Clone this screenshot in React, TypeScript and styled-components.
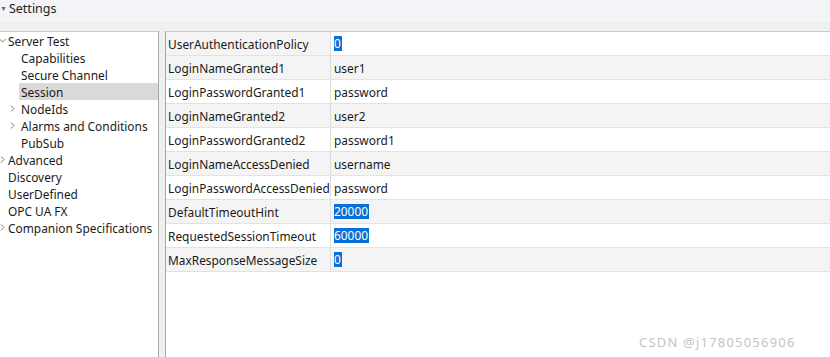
import styled, { createGlobalStyle } from "styled-components"

const GlobalStyle = createGlobalStyle`
    html, body {
        margin: 0;
        padding: 0;
        background: #f0f0f0;
    }
    body {
        font-family: "Noto Sans", "Open Sans", sans-serif;
        font-size: 11.9px;
        color: #1a1a1a;
    }
`

const Window = styled.div`
    display: flex;
    flex-direction: column;
    width: 830px;
    height: 357px;
    overflow: hidden;
`

const TitleBar = styled.div`
    display: flex;
    align-items: flex-start;
    height: 22px;
    gap: 2px;
    background: #f2f4f8;
    border-bottom: 1px solid #e8eaee;
    color: #222;
    font-size: 12.5px;
    line-height: 17px;
`

const TitleArrow = styled.span`
    font-size: 7px;
    color: #666;
`

const Body = styled.div`
    flex: 1;
    display: flex;
    padding-top: 8px;
    min-height: 0;
`

const TreePanel = styled.div`
    width: 158px;
    background: #fff;
    border-top: 1px solid #c8c8c8;
    border-right: 1px solid #a8a8a8;
`

const Splitter = styled.div`
    width: 6px;
    background: #efefef;
`

const TablePanel = styled.div`
    flex: 1;
    background: #fff;
    border-top: 1px solid #c8c8c8;
    border-left: 1px solid #a8a8a8;
`

const TreeRow = styled.div<{ $level: number; $selected?: boolean }>`
    display: flex;
    align-items: center;
    height: 17px;
    margin-left: ${p => (p.$level === 0 ? 0 : 19)}px;
    padding-left: ${p => (p.$level === 0 ? 8 : 2)}px;
    position: relative;
    background: ${p => (p.$selected ? "#d9d9d9" : "transparent")};
    white-space: nowrap;
`

const Twisty = styled.span<{ $level: number }>`
    position: absolute;
    left: ${p => (p.$level === 0 ? -2 : -11)}px;
    top: 0;
    width: 8px;
    height: 17px;
    display: flex;
    align-items: center;
    justify-content: center;
`

const Table = styled.div`
    display: grid;
    grid-template-columns: 164px 1fr;
`

const Cell = styled.div<{ $shade: boolean; $value?: boolean }>`
    height: 23px;
    display: flex;
    align-items: center;
    padding-left: ${p => (p.$value ? 3 : 2)}px;
    background: ${p => (p.$shade ? "#f4f4f4" : "#fff")};
    border-bottom: 1px solid #e2e2e2;
    border-left: ${p => (p.$value ? "1px solid #dcdcdc" : "none")};
    white-space: nowrap;
    overflow: hidden;
`

const Selected = styled.span`
    background: #0a6fd6;
    color: #fff;
    padding: 0 1px 0 0;
    line-height: 15px;
`

const Watermark = styled.div`
    position: absolute;
    left: 639px;
    top: 333px;
    color: #c4c4c4;
    font-size: 13px;
    letter-spacing: 1.2px;
`

type Node = { label: string; level: number; twisty?: "open" | "closed"; selected?: boolean }

const tree: Node[] = [
    { label: "Server Test", level: 0, twisty: "open" },
    { label: "Capabilities", level: 1 },
    { label: "Secure Channel", level: 1 },
    { label: "Session", level: 1, selected: true },
    { label: "NodeIds", level: 1, twisty: "closed" },
    { label: "Alarms and Conditions", level: 1, twisty: "closed" },
    { label: "PubSub", level: 1 },
    { label: "Advanced", level: 0, twisty: "closed" },
    { label: "Discovery", level: 0 },
    { label: "UserDefined", level: 0 },
    { label: "OPC UA FX", level: 0 },
    { label: "Companion Specifications", level: 0, twisty: "closed" },
]

const rows: { name: string; value: string; selected?: boolean }[] = [
    { name: "UserAuthenticationPolicy", value: "0", selected: true },
    { name: "LoginNameGranted1", value: "user1" },
    { name: "LoginPasswordGranted1", value: "password" },
    { name: "LoginNameGranted2", value: "user2" },
    { name: "LoginPasswordGranted2", value: "password1" },
    { name: "LoginNameAccessDenied", value: "username" },
    { name: "LoginPasswordAccessDenied", value: "password" },
    { name: "DefaultTimeoutHint", value: "20000", selected: true },
    { name: "RequestedSessionTimeout", value: "60000", selected: true },
    { name: "MaxResponseMessageSize", value: "0", selected: true },
]

const Chevron = ({ open }: { open: boolean }) => (
    <svg width="7" height="7" viewBox="0 0 7 7">
        <path d={open ? "M0.5 2 L3.5 5 L6.5 2" : "M2 0.5 L5 3.5 L2 6.5"} fill="none" stroke="#7a7a7a" strokeWidth="1" />
    </svg>
)

export default function App() {
    return (
        <Window>
            <GlobalStyle />
            <TitleBar>
                <TitleArrow>▼</TitleArrow>
                <span>Settings</span>
            </TitleBar>
            <Body>
                <TreePanel>
                    {tree.map(n => (
                        <TreeRow key={n.label} $level={n.level} $selected={n.selected}>
                            {n.twisty && (
                                <Twisty $level={n.level}>
                                    <Chevron open={n.twisty === "open"} />
                                </Twisty>
                            )}
                            {n.label}
                        </TreeRow>
                    ))}
                </TreePanel>
                <Splitter />
                <TablePanel>
                    <Table>
                        {rows.map((r, i) => [
                            <Cell key={r.name} $shade={i % 2 === 1 || i === 0}>{r.name}</Cell>,
                            <Cell key={r.name + "v"} $shade={i % 2 === 1} $value>
                                {r.selected ? <Selected>{r.value}</Selected> : r.value}
                            </Cell>,
                        ])}
                    </Table>
                </TablePanel>
            </Body>
            <Watermark>CSDN @j17805056906</Watermark>
        </Window>
    )
}
